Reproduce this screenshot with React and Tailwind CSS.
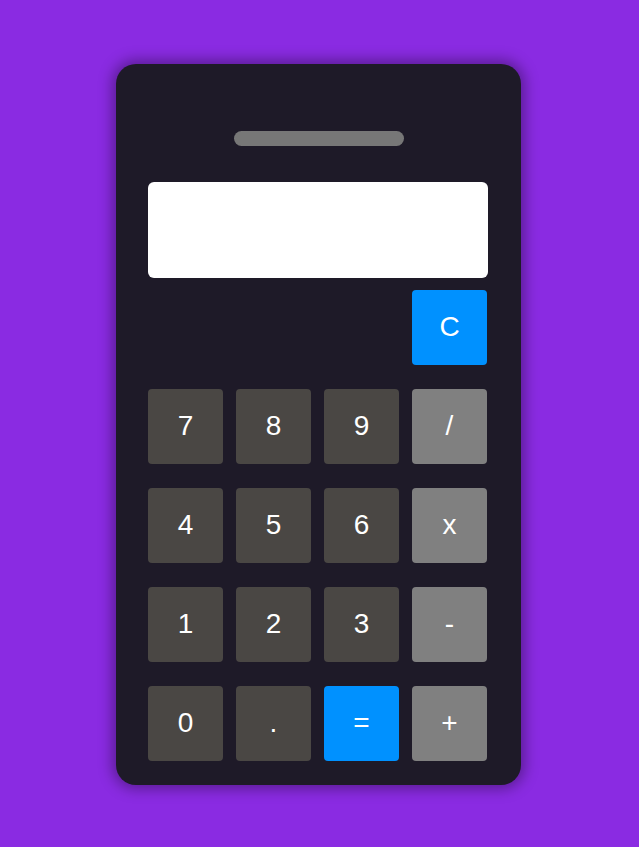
const rows = [
  ['7', '8', '9', '/'],
  ['4', '5', '6', 'x'],
  ['1', '2', '3', '-'],
  ['0', '.', '=', '+'],
]

function Key({ label, kind }) {
  const color =
    kind === 'blue' ? 'bg-[#0091ff]' : kind === 'op' ? 'bg-[#808080]' : 'bg-[#4a4744]'
  return (
    <button
      type="button"
      className={`w-[75px] h-[75px] rounded-[4px] ${color} text-white text-[28px] pb-[2px] flex items-center justify-center`}
    >
      {label}
    </button>
  )
}

export default function App() {
  return (
    <div
      className="min-h-screen w-full bg-[#8a2be2] flex items-center justify-center pr-[2px] pt-[2px]"
      style={{ fontFamily: '"Liberation Sans", Arial, sans-serif' }}
    >
      <div className="w-[405px] bg-[#1e1a28] rounded-[20px] shadow-[0_0_14px_4px_rgba(0,0,0,0.35)] pt-[67px] pb-[24px] px-[32px] flex flex-col">
        <div className="self-center w-[170px] h-[15px] rounded-full bg-[#777777]" />
        <div className="mt-[36px] h-[96px] w-[340px] bg-white rounded-[6px]" />
        <div className="mt-[12px] flex justify-end pr-[2px]">
          <Key label="C" kind="blue" />
        </div>
        <div className="mt-[24px] flex flex-col gap-[24px]">
          {rows.map((row, i) => (
            <div key={i} className="flex gap-[13px]">
              {row.map((k, j) => (
                <Key
                  key={k}
                  label={k}
                  kind={k === '=' ? 'blue' : j === 3 ? 'op' : 'num'}
                />
              ))}
            </div>
          ))}
        </div>
      </div>
    </div>
  )
}
